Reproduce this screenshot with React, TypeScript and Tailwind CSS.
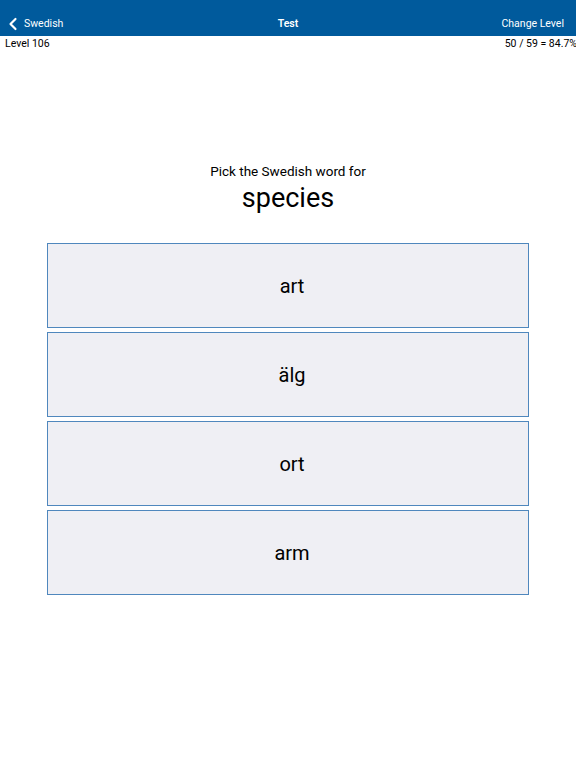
import { ChevronLeft } from 'lucide-react'

const answers = ['art', 'älg', 'ort', 'arm']

export default function App() {
  return (
    <div className="w-[576px] h-[768px] bg-white text-black font-['Roboto','Liberation_Sans',sans-serif]">
      <header className="relative h-9 bg-[#005a9c] text-white flex items-end justify-between pl-1 pr-3 pb-[5px] text-[10.5px] leading-[14px]">
        <div className="flex items-center gap-[1px]">
          <ChevronLeft size={20} strokeWidth={2.6} className="-ml-[1px] -my-1" />
          <span>Swedish</span>
        </div>
        <span className="font-semibold absolute left-1/2 -translate-x-1/2 bottom-[5px]">Test</span>
        <span>Change Level</span>
      </header>
      <div className="flex justify-between pl-[5px] text-[10.5px] leading-[13px] pt-px">
        <span>Level 106</span>
        <span className="-mr-px">50 / 59 = 84.7%</span>
      </div>
      <div className="flex flex-col items-center mt-[112px]">
        <p className="text-[13.5px] leading-[18px]">Pick the Swedish word for</p>
        <h1 className="text-[27px] leading-[32px] mt-[2px]">species</h1>
      </div>
      <div className="mx-[47px] mt-[29px] flex flex-col gap-[4px]">
        {answers.map((a) => (
          <button
            key={a}
            className="h-[85px] w-full border border-[#4f87bd] bg-[#efeff4] text-[20px] flex items-center justify-center"
          >
            <span className="ml-2">{a}</span>
          </button>
        ))}
      </div>
    </div>
  )
}
